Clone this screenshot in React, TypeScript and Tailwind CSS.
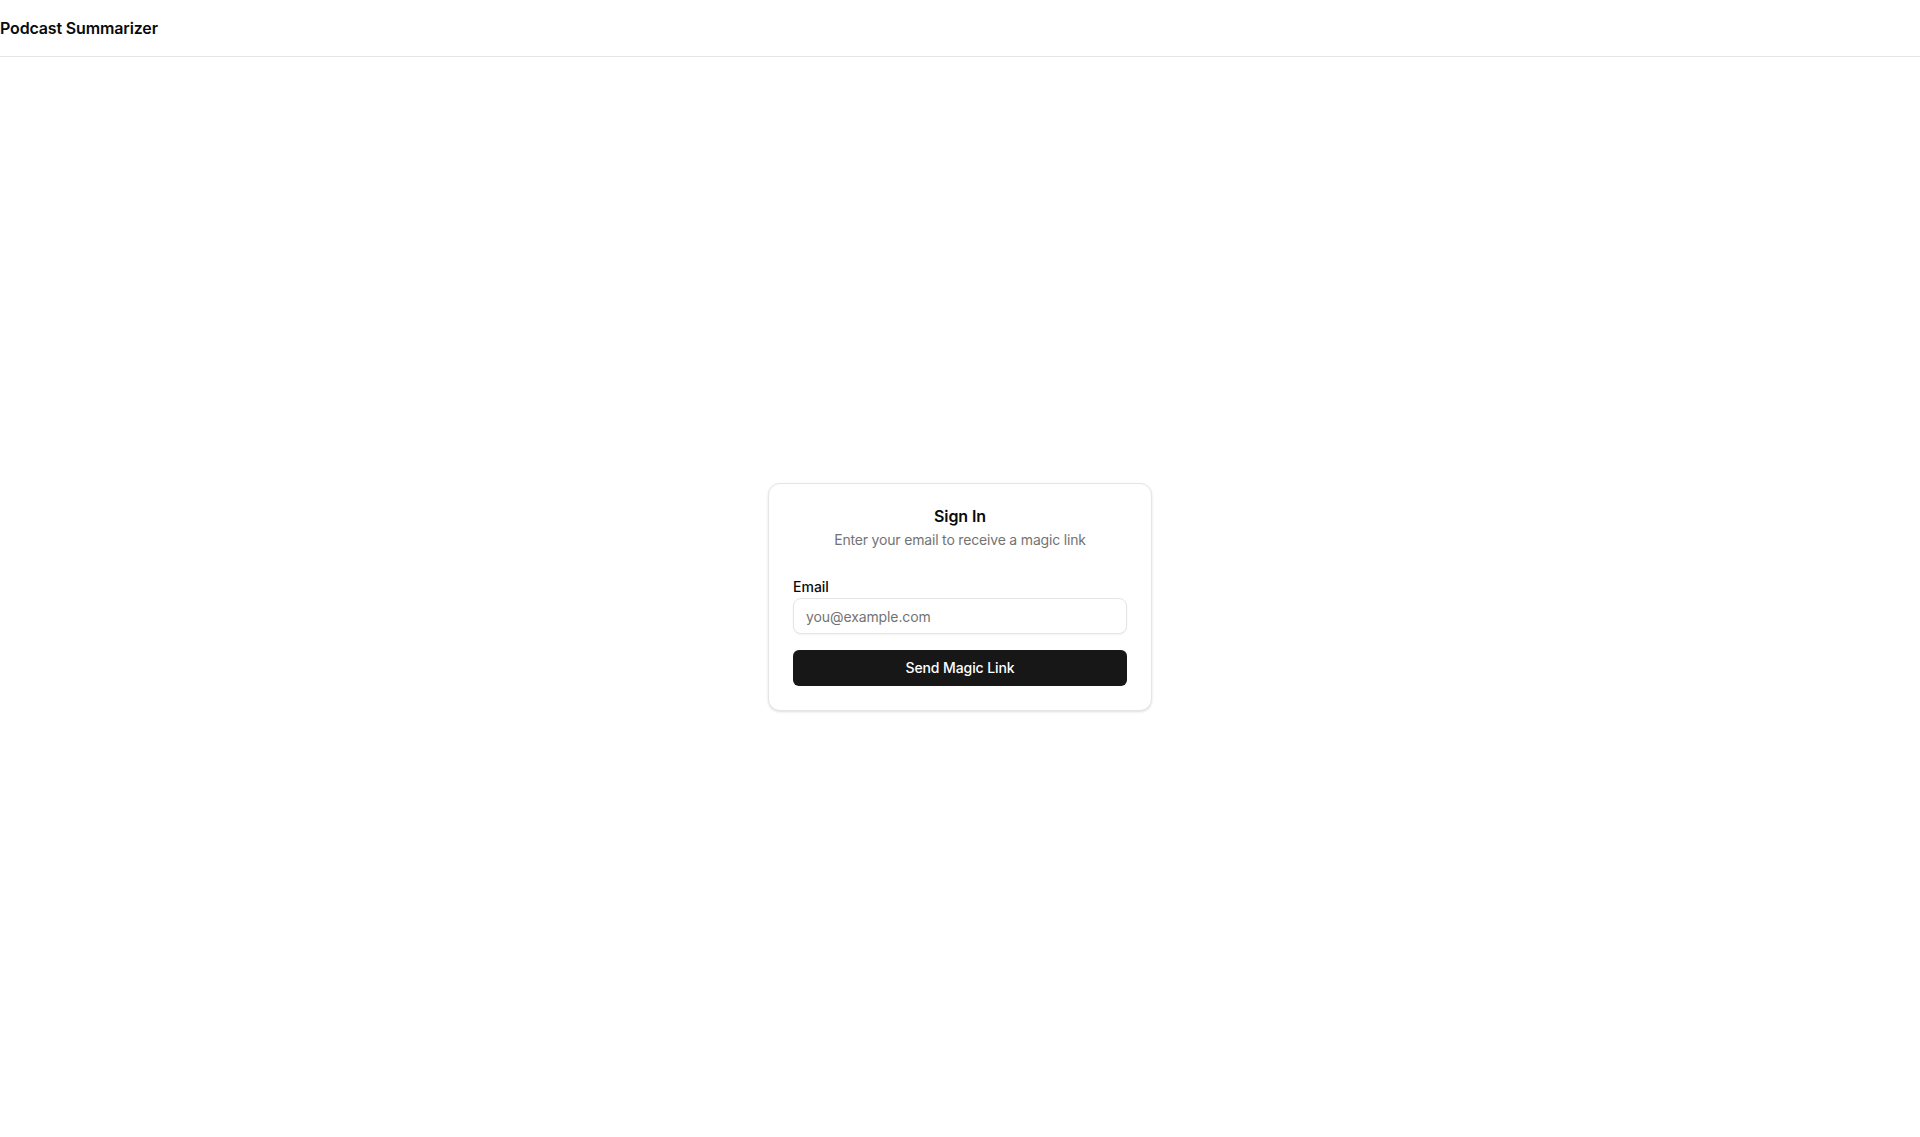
import React from "react";

export default function App() {
  return (
    <div
      className="min-h-screen bg-white text-[#0a0a0a]"
      style={{ fontFamily: "Inter, 'Noto Sans', 'Liberation Sans', sans-serif" }}
    >
      <header className="h-[57px] border-b border-[#e5e5e5] flex items-center">
        <span className="text-base font-semibold leading-6 tracking-[-0.15px]">Podcast Summarizer</span>
      </header>
      <main className="flex h-[1080px] items-center justify-center">
        <div className="w-[384px] rounded-xl border border-[#e5e5e5] bg-white p-6 shadow-sm">
          <div className="flex flex-col items-center text-center">
            <h2 className="text-base font-semibold leading-none tracking-[-0.1px]">Sign In</h2>
            <p className="mt-1.5 text-sm leading-5 tracking-[-0.18px] text-[#737373]">
              Enter your email to receive a magic link
            </p>
          </div>
          <form className="mt-[27px]" onSubmit={(e) => e.preventDefault()}>
            <label htmlFor="email" className="block text-sm font-medium leading-5">
              Email
            </label>
            <input
              id="email"
              type="email"
              placeholder="you@example.com"
              className="mt-px block h-9 w-full rounded-lg border border-[#e5e5e5] bg-white px-3 text-sm tracking-[-0.1px] text-[#0a0a0a] placeholder:text-[#737373] shadow-xs outline-none"
            />
            <button
              type="submit"
              className="mt-4 flex h-9 w-full items-center justify-center rounded-md bg-[#171717] text-sm font-medium tracking-[-0.1px] text-white"
            >
              Send Magic Link
            </button>
          </form>
        </div>
      </main>
    </div>
  );
}
